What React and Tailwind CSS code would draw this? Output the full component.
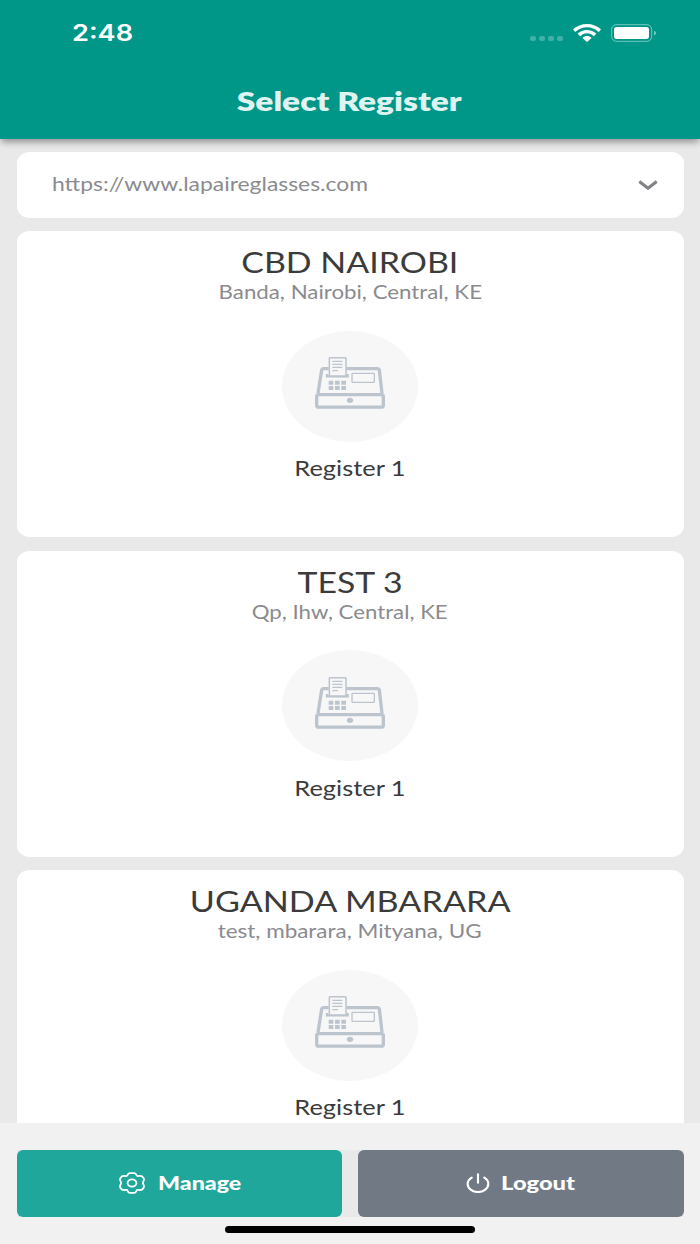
import React from 'react';

const stores = [
    { name: 'CBD NAIROBI', address: 'Banda, Nairobi, Central, KE', nameScale: 'scale-x-[1.17]', addressScale: 'scale-x-[1.173]' },
    { name: 'TEST 3', address: 'Qp, Ihw, Central, KE', nameScale: 'scale-x-[1.165]', addressScale: 'scale-x-[1.17]' },
    { name: 'UGANDA MBARARA', address: 'test, mbarara, Mityana, UG', nameScale: 'scale-x-[1.178]', addressScale: 'scale-x-[1.182]' },
];

const StatusBar = () => (
    <div className="flex h-[66px] items-center justify-between pl-[72px] pr-[43px]">
        <span className="origin-left scale-x-[1.18] font-['Inter'] text-[23px] font-semibold leading-none">2:48</span>
        <div className="flex items-center">
            <div className="mt-[11px] flex gap-[3px]">
                <span className="h-[5px] w-[6px] rounded-[2px] bg-white/25" />
                <span className="h-[5px] w-[6px] rounded-[2px] bg-white/25" />
                <span className="h-[5px] w-[6px] rounded-[2px] bg-white/25" />
                <span className="h-[5px] w-[6px] rounded-[2px] bg-white/25" />
            </div>
            <svg className="ml-[10px] h-[18px] w-[28px]" viewBox="0 0 84 54" fill="currentColor">
                <path d="M42 0C58 0 73 6 83 15q1 1 0 2l-5 6q-1 1-2 0C67 15 55 10 42 10S17 15 8 23q-1 1-2 0l-5-6q-1-1 0-2C11 6 26 0 42 0z" />
                <path d="M42 18c11 0 20 4 27 10q1 1 0 2l-6 6q-1 1-2 0c-5-5-11-8-19-8s-14 3-19 8q-1 1-2 0l-6-6q-1-1 0-2c7-6 16-10 27-10z" />
                <path d="M42 36c5 0 9 2 13 5q1 1 0 2L43 53q-1 1-2 0L29 43q-1-1 0-2c4-3 8-5 13-5z" />
            </svg>
            <svg className="ml-[10px] h-[18px] w-[46px]" viewBox="0 0 138 54">
                <rect x="2" y="2" width="120" height="50" rx="14" fill="none" stroke="white" strokeOpacity=".45" strokeWidth="3" />
                <rect x="9" y="9" width="105" height="36" rx="8" fill="white" />
                <path d="M129 20q6 2 6 7t-6 7z" fill="white" fillOpacity=".5" />
            </svg>
        </div>
    </div>
);

const RegisterIcon = () => (
    <svg className="h-[52px] w-[70px]" viewBox="135 111 210 156" fill="none" stroke="#bcc4ce">
        <path d="M176 146h-16q-4 0-5 4l-11 70M230 146h93q4 0 5 4l8 70" strokeWidth="10" />
        <rect x="140" y="224" width="200" height="37.500" rx="6" strokeWidth="10" />
        <path d="M171 162v7h62v-7" strokeWidth="7" />
        <rect x="178" y="113" width="50" height="55" rx="3" fill="#f7f7f7" strokeWidth="4.500" />
        <path d="M187 124h30M187 133h30M187 142h30M187 152h17" strokeWidth="3.500" />
        <rect x="246" y="160" width="67" height="27" rx="2" strokeWidth="4" />
        <path d="M176 188h14M195 188h14M214 188h14M176 204h14M195 204h14M214 204h14" strokeWidth="12" />
        <ellipse cx="240" cy="241" rx="9.500" ry="8" fill="#bcc4ce" stroke="none" />
    </svg>
);

const StoreCard = ({ store }) => (
    <div className="flex h-[306px] shrink-0 flex-col items-center rounded-[13px/11px] bg-white pt-[14px]">
        <h2 className={`${store.nameScale} whitespace-nowrap text-[29px] leading-[34px] text-[#3b3b3b]`}>{store.name}</h2>
        <p className={`${store.addressScale} mt-px whitespace-nowrap text-[19px] leading-[24px] text-[#8b8b8f]`}>{store.address}</p>
        <div className="mt-[26.500px] flex h-[111px] w-[136px] items-center justify-center rounded-[50%] bg-[#f7f7f7] pb-[6px]">
            <RegisterIcon />
        </div>
        <span className="mt-[14.500px] scale-x-[1.21] text-[21px] leading-[24px] text-[#3b3b3b]">Register 1</span>
    </div>
);

const App = () => {
    return (
        <div className="flex h-[1244px] w-[700px] flex-col overflow-hidden bg-[#e9e9e9] font-['Lato',sans-serif]">
            <header className="z-10 h-[138.500px] shrink-0 bg-[#009788] text-white shadow-[0_4px_7px_-1px_rgba(0,0,0,0.38)]">
                <StatusBar />
                <h1 className="mt-[18px] flex justify-center pr-[2px] text-[26px] font-extrabold leading-[34px] text-[#dff3f1]">
                    <span className="scale-x-[1.29]">Select Register</span>
                </h1>
            </header>

            <main className="flex min-h-0 flex-1 flex-col gap-[13.500px] overflow-hidden px-[16.500px] pt-[13.500px]">
                <div className="flex h-[65.500px] shrink-0 items-center justify-between rounded-[13px/11px] bg-white pl-[35.500px] pr-[26px] text-[#8b8b8f]">
                    <span className="origin-left scale-x-[1.205] pb-px text-[19px]">https://www.lapaireglasses.com</span>
                    <svg className="mt-px h-[11px] w-[20px]" viewBox="0 0 20 11" fill="none" stroke="#828286" strokeWidth="3">
                        <path d="M1.300 1.500L10 8.300L18.700 1.500" />
                    </svg>
                </div>
                {stores.map((store) => (
                    <StoreCard key={store.name} store={store} />
                ))}
            </main>

            <footer className="flex h-[121px] shrink-0 flex-col items-center bg-[#f1f1f1] pt-[26.500px] text-[19px] font-black text-white">
                <div className="flex w-[667px] justify-between bg-[#e9e9e9]">
                    <button className="flex h-[67.500px] w-[325.500px] items-center rounded-[6px] bg-[#20a79c] pl-[102px]">
                        <svg className="h-[22px] w-[26px]" viewBox="356 247 79 66" fill="none" stroke="currentColor" strokeWidth="5.500">
                            <path d="M383 254q2-4 6-4h13q4 0 6 4q1 6 7 5q11-2 15 5q3 5 1 9q-5 7 0 13q2 5-1 10q-4 7-15 5q-6-1-7 5q-2 4-6 4h-13q-4 0-6-4q-1-6-7-5q-11 2-15-5q-3-5-1-10q5-6 0-13q-2-4 1-9q4-7 15-5q6 1 7-5z" />
                            <ellipse cx="395.500" cy="280" rx="13.500" ry="11" />
                        </svg>
                        <span className="ml-[13px] origin-left scale-x-[1.22]">Manage</span>
                    </button>
                    <button className="flex h-[67.500px] w-[325.500px] items-center rounded-[6px] bg-[#717984] pl-[107.500px]">
                        <svg className="h-[20px] w-[24px]" viewBox="347 250 72 60" fill="none" stroke="currentColor" strokeWidth="6.500" strokeLinecap="round">
                            <path d="M383 254v25M364 264c-8 5-12 11-12 18c0 14 14 25 31 25s31-11 31-25c0-7-4-13-12-18" />
                        </svg>
                        <span className="ml-[11px] origin-left scale-x-[1.25]">Logout</span>
                    </button>
                </div>
                <div className="mt-[8.500px] h-[7px] w-[250px] rounded-full bg-black" />
            </footer>
        </div>
    );
};

export default App;
